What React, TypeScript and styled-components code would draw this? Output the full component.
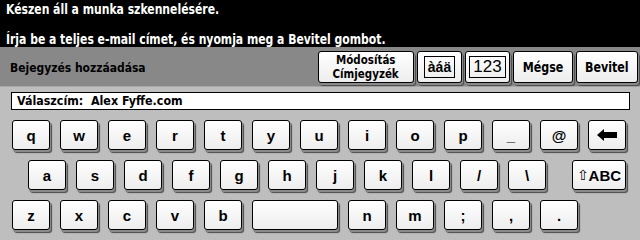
import React from 'react'
import styled, { createGlobalStyle } from 'styled-components'

const GlobalStyle = createGlobalStyle`
  html, body { margin: 0; padding: 0; background: #bebebe; }
  #root { width: 640px; height: 240px; overflow: hidden; }
`

const condensed = `"Liberation Sans Narrow", "DejaVu Sans Condensed", "Liberation Sans", Arial, sans-serif`

const row1 = ['q', 'w', 'e', 'r', 't', 'y', 'u', 'i', 'o', 'p', '_', '@']
const row2 = ['a', 's', 'd', 'f', 'g', 'h', 'j', 'k', 'l', '/', '\\']
const row3a = ['z', 'x', 'c', 'v', 'b']
const row3b = ['n', 'm', ';', ',', '.']

export default function App() {
    return (
        <Screen>
            <GlobalStyle />
            <Header>
                <Message>Készen áll a munka szkennelésére.</Message>
                <Message>Írja be a teljes e-mail címet, és nyomja meg a Bevitel gombot.</Message>
            </Header>

            <Bar>
                <BarTitle>Bejegyzés hozzáadása</BarTitle>
                <BarButtons>
                    <BarButton $w={96}>
                        <TwoLine>
                            <Narrow>Módosítás</Narrow>
                            <Narrow>Címjegyzék</Narrow>
                        </TwoLine>
                    </BarButton>
                    <BarButton $w={45}><Boxed>àáä</Boxed></BarButton>
                    <BarButton $w={45}><Boxed $big>123</Boxed></BarButton>
                    <BarButton $w={60}><Narrow>Mégse</Narrow></BarButton>
                    <BarButton $w={62}><Narrow>Bevitel</Narrow></BarButton>
                </BarButtons>
            </Bar>

            <Panel>
                <Field><FieldText>Válaszcím:&nbsp; Alex Fyffe.com</FieldText></Field>

                <KeyRow $indent={12}>
                    {row1.map(k => <Key key={k}>{k}</Key>)}
                    <Key>
                        <svg width="20" height="12" viewBox="0 0 20 12">
                            <path d="M0 6 L7 0 L7 3 L20 3 L20 9 L7 9 L7 12 Z" fill="#000" />
                        </svg>
                    </Key>
                </KeyRow>

                <KeyRow $indent={28}>
                    {row2.map(k => <Key key={k}>{k}</Key>)}
                    <Key $w={54} $gapBefore={26}><Shift>⇧</Shift>ABC</Key>
                </KeyRow>

                <KeyRow $indent={12}>
                    {row3a.map(k => <Key key={k}>{k}</Key>)}
                    <Key $w={86}>&nbsp;</Key>
                    {row3b.map(k => <Key key={k}>{k}</Key>)}
                </KeyRow>
            </Panel>
        </Screen>
    )
}

const Screen = styled.div`
    width: 640px;
    height: 240px;
    background: #bebebe;
    display: flex;
    flex-direction: column;
`

const Header = styled.header`
    background: #000;
    height: 47px;
    padding: 1px 0 0 6px;
    box-sizing: border-box;
    display: flex;
    flex-direction: column;
    gap: 14px;
`

const Message = styled.div`
    color: #fff;
    font-family: ${condensed};
    font-weight: 700;
    font-size: 14px;
    line-height: 16px;
    white-space: nowrap;
    transform: scaleX(0.86);
    transform-origin: left center;
`

const Bar = styled.div`
    background: #888888;
    height: 41px;
    border-bottom: 1px solid #a8a8a8;
    display: flex;
    align-items: center;
    justify-content: space-between;
    padding: 0 2px 0 10px;
`

const BarTitle = styled.div`
    font-family: ${condensed};
    font-weight: 700;
    font-size: 13px;
    color: #000;
    padding-top: 2px;
    white-space: nowrap;
    transform: scaleX(0.92);
    transform-origin: left center;
`

const BarButtons = styled.div`
    display: flex;
    gap: 3px;
    align-items: center;
`

const KeyFace = styled.div`
    box-sizing: border-box;
    background: linear-gradient(#ffffff, #ededed);
    border: 1px solid #000;
    border-radius: 3px;
    box-shadow: 1px 2px 0 #8a8a8a, 2px 3px 1px #4a4a4a;
    display: flex;
    align-items: center;
    justify-content: center;
    color: #000;
`

const BarButton = styled(KeyFace)<{ $w: number }>`
    width: ${p => p.$w}px;
    height: 32px;
    font-family: ${condensed};
    font-weight: 700;
    font-size: 14px;
`

const Narrow = styled.span`
    display: inline-block;
    white-space: nowrap;
    transform: scaleX(0.88);
`

const TwoLine = styled.div`
    display: flex;
    flex-direction: column;
    align-items: center;
    font-size: 13px;
    line-height: 14px;
`

const Boxed = styled.div<{ $big?: boolean }>`
    border: 1px solid #000;
    padding: 0 3px;
    height: 20px;
    display: flex;
    align-items: center;
    font-family: "Liberation Sans", Arial, sans-serif;
    font-size: ${p => (p.$big ? 17 : 14)}px;
    font-weight: ${p => (p.$big ? 400 : 700)};
`

const Panel = styled.main`
    flex: 1;
    padding: 5px 0 0 0;
    display: flex;
    flex-direction: column;
`

const Field = styled.div`
    margin: 0 10px 10px 11px;
    height: 18px;
    box-sizing: border-box;
    background: #fff;
    border: 1px solid #000;
    padding-left: 5px;
`

const FieldText = styled.div`
    font-family: ${condensed};
    font-weight: 700;
    font-size: 13px;
    line-height: 16px;
    white-space: nowrap;
    transform: scaleX(0.95);
    transform-origin: left center;
`

const KeyRow = styled.div<{ $indent: number }>`
    display: flex;
    gap: 10px;
    padding-left: ${p => p.$indent}px;
    margin-bottom: 10px;
`

const Key = styled(KeyFace)<{ $w?: number; $gapBefore?: number }>`
    width: ${p => p.$w ?? 38}px;
    height: 30px;
    margin-left: ${p => (p.$gapBefore ? p.$gapBefore - 10 : 0)}px;
    font-family: "Liberation Sans", Arial, sans-serif;
    font-weight: 700;
    font-size: 15px;
`

const Shift = styled.span`
    font-family: "DejaVu Sans", sans-serif;
    font-weight: 400;
    font-size: 14px;
`
